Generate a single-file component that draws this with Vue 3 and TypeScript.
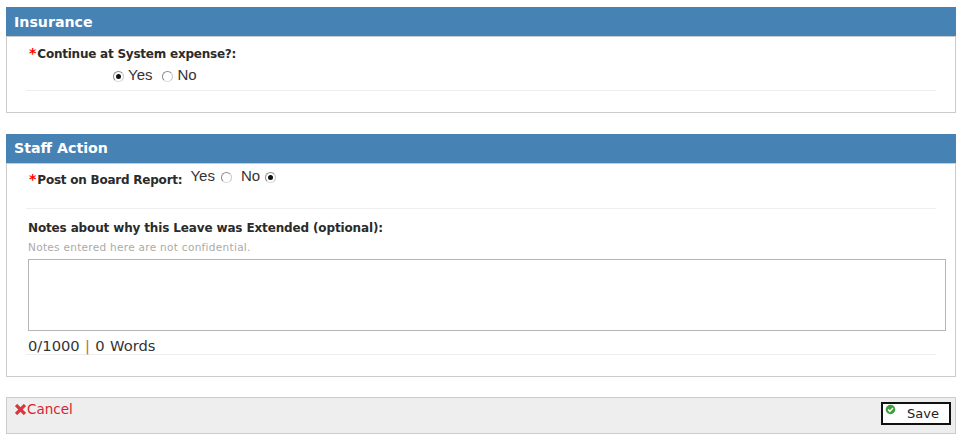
<template>
  <div class="page">
    <section class="panel insurance">
      <h2 class="panel-head">Insurance</h2>
      <div class="panel-body">
        <div class="field-label"><span class="req">*</span>Continue at System expense?:</div>
        <div class="radio-row first">
          <span class="radio on"></span>
          <span class="opt">Yes</span>
          <span class="radio no-radio"></span>
          <span class="opt">No</span>
        </div>
        <div class="rule"></div>
      </div>
    </section>

    <section class="panel staff">
      <h2 class="panel-head">Staff Action</h2>
      <div class="panel-body">
        <div class="post-row">
          <div class="field-label"><span class="req">*</span>Post on Board Report:</div>
          <div class="radio-row second">
            <span class="opt">Yes</span>
            <span class="radio"></span>
            <span class="opt no-opt">No</span>
            <span class="radio last"></span>
          </div>
        </div>
        <div class="rule"></div>
        <div class="notes-label">Notes about why this Leave was Extended (optional):</div>
        <div class="hint">Notes entered here are not confidential.</div>
        <textarea class="notes"></textarea>
        <div class="counter">0/1000 <span class="sep">|</span> 0 Words</div>
        <div class="rule"></div>
      </div>
    </section>

    <div class="actions">
      <a class="cancel">
        <svg class="x-icon" viewBox="0 0 10 10"><path d="M2 2 8 8M8 2 2 8" stroke="#d9363e" stroke-width="3" stroke-linecap="square" /></svg>Cancel
      </a>
      <button class="save" type="button">
        <svg class="ok-icon" viewBox="0 0 12 12"><circle cx="6" cy="6" r="5.2" fill="#3f9e3c" /><path d="M3.4 6.1 5.3 8 8.7 4.3" fill="none" stroke="#fff" stroke-width="1.6" /></svg>
        Save
      </button>
    </div>
  </div>
</template>

<script setup lang="ts">
</script>

<style scoped>
.page { width: 950px; padding: 7px 8px 0 6px; font-family: "DejaVu Sans", Verdana, sans-serif; color: #333; }
.panel { border: 1px solid #ccc; border-top: 0; box-sizing: border-box; }
.insurance { height: 106px; }
.staff { height: 243px; margin-top: 21px; }
.panel-head { margin: 0 -1px; height: 30px; box-sizing: border-box; padding: 1px 0 0 8px; background: #4682b4; border-bottom: 1px solid #ccc; color: #fff; font-size: 14.2px; font-weight: bold; line-height: 28px; }
.staff .panel-head { padding-top: 0; }
.panel-body { padding: 0 19px; }
.field-label { font-size: 12px; font-weight: bold; line-height: 16px; color: #2b2b2b; padding-left: 3px; letter-spacing: -0.23px; }
.insurance .field-label { padding-top: 8px; }
.req { color: #f00; font-size: 14px; margin-right: 1px; letter-spacing: 0; }
.radio-row { display: flex; align-items: center; font-family: "Liberation Sans", Arial, sans-serif; font-size: 15px; color: #333; }
.first { padding-left: 87px; height: 20px; margin-top: 3px; }
.opt { line-height: 18px; }
.radio { position: relative; box-sizing: border-box; width: 11px; height: 11px; flex: none; border: 1px solid; border-color: #8a8a8a #c8c8c8 #dcdcdc #8a8a8a; border-radius: 50%; background: #fff; }
.radio.on::after, .radio.last::after { content: ""; position: absolute; left: 2px; top: 2px; width: 5px; height: 5px; border-radius: 50%; background: #111; }
.first .radio { margin-right: 4px; margin-top: 2px; }
.first .no-radio { margin-left: 10px; margin-right: 4px; margin-top: 3px; }
.post-row { display: flex; height: 44px; }
.post-row .field-label { padding-top: 7px; }
.second { height: 18px; margin-top: 3px; margin-left: 8px; align-self: flex-start; }
.second .radio { margin-left: 6px; margin-top: 2px; }
.second .last { margin-left: 5px; }
.no-opt { margin-left: 9px; }
.rule { height: 1px; background: #eee; }
.first + .rule { margin-top: 5px; }
.notes-label { margin-top: 11px; padding-left: 2px; font-size: 12px; font-weight: bold; line-height: 16px; color: #2b2b2b; letter-spacing: -0.14px; }
.hint { margin-top: 4px; padding-left: 2px; font-size: 10.5px; line-height: 14px; color: #aaa; letter-spacing: 0.3px; }
.notes { display: block; box-sizing: border-box; width: 918px; height: 72px; margin: 5px 0 0 2px; border: 1px solid #b5b5b5; background: #fff; padding: 2px; resize: none; outline: 0; }
.counter { padding-left: 2px; font-size: 14.7px; word-spacing: 0.7px; line-height: 16px; margin-top: 7px; color: #333; }
.sep { color: #c0701f; }
.actions { display: flex; justify-content: space-between; align-items: flex-start; box-sizing: border-box; height: 37px; margin-top: 20px; background: #eee; border: 1px solid #ccc; padding: 3px 4px 0 8px; }
.cancel { display: flex; align-items: center; font-size: 13.5px; line-height: 16px; color: #d9232e; }
.x-icon { width: 11px; height: 11px; margin: 0 1px 0 0; }
.save { position: relative; box-sizing: border-box; width: 70px; height: 23px; margin-top: 1px; background: #fff; border: 2px solid #111; font: 13px "DejaVu Sans", Verdana, sans-serif; color: #222; padding: 0 0 0 14px; }
.ok-icon { position: absolute; left: 2px; top: 0; width: 11px; height: 11px; }
</style>
